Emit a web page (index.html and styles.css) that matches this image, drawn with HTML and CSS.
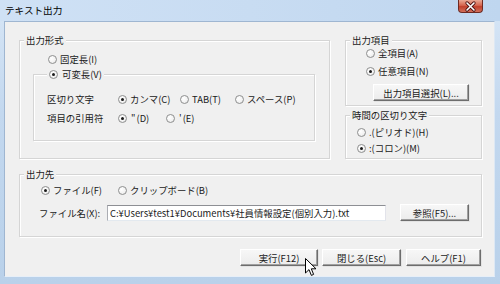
FILE: index.html
```html
<!DOCTYPE html>
<html lang="ja">
<head>
    <meta charset="UTF-8">
    <title>テキスト出力</title>
    <link rel="stylesheet" href="styles.css">
</head>
<body>
    <div class="window">
        <div class="titlebar">
            <span class="title">テキスト出力</span>
            <div class="close">
                <svg width="25" height="13" viewBox="0 0 25 13">
                    <path d="M9 3 L16 10 M16 3 L9 10" stroke="#4a1010" stroke-width="3.2" stroke-linecap="round"/>
                    <path d="M9 3 L16 10 M16 3 L9 10" stroke="#fff" stroke-width="1.6" stroke-linecap="round"/>
                </svg>
            </div>
        </div>

        <div class="client">
            <div class="top">
                <!-- 出力形式 -->
                <div class="group g-format">
                    <span class="legend">出力形式</span>
                    <div class="opt fixed"><span class="radio"></span>固定長(I)</div>
                    <div class="group g-variable">
                        <span class="legend"><span class="radio on"></span>可変長(V)</span>
                        <div class="field-row row-sep">
                            <span class="field-label">区切り文字</span>
                            <span class="opt"><span class="radio on"></span>カンマ(C)</span>
                            <span class="opt"><span class="radio"></span>TAB(T)</span>
                            <span class="opt"><span class="radio"></span>スペース(P)</span>
                        </div>
                        <div class="field-row row-quote">
                            <span class="field-label">項目の引用符</span>
                            <span class="opt"><span class="radio on"></span><span class="quote">"</span>(D)</span>
                            <span class="opt"><span class="radio"></span><span class="quote">'</span>(E)</span>
                        </div>
                    </div>
                </div>

                <div class="side">
                    <!-- 出力項目 -->
                    <div class="group g-items">
                        <span class="legend">出力項目</span>
                        <div class="opt"><span class="radio"></span>全項目(A)</div>
                        <div class="opt"><span class="radio on"></span>任意項目(N)</div>
                        <button class="btn btn-select">出力項目選択(L)...</button>
                    </div>
                    <!-- 時間の区切り文字 -->
                    <div class="group g-time">
                        <span class="legend">時間の区切り文字</span>
                        <div class="opt"><span class="radio"></span>.(ピリオド)(H)</div>
                        <div class="opt"><span class="radio on"></span>:(コロン)(M)</div>
                    </div>
                </div>
            </div>

            <!-- 出力先 -->
            <div class="group g-dest">
                <span class="legend">出力先</span>
                <div class="dest-kind">
                    <span class="opt"><span class="radio on"></span>ファイル(F)</span>
                    <span class="opt"><span class="radio"></span>クリップボード(B)</span>
                </div>
                <div class="dest-file">
                    <span class="file-label">ファイル名(X):</span>
                    <div class="textbox">C:¥Users¥test1¥Documents¥社員情報設定(個別入力).txt</div>
                    <button class="btn btn-browse">参照(F5)...</button>
                </div>
            </div>

            <div class="actions">
                <button class="btn btn-run">実行(F12)</button>
                <button class="btn btn-close">閉じる(Esc)</button>
                <button class="btn btn-help">ヘルプ(F1)</button>
            </div>
        </div>

        <svg class="cursor" width="12" height="19" viewBox="0 0 12 19">
            <path d="M0.5 0.5 L0.5 15 L4 11.6 L6.4 17.4 L8.6 16.4 L6.3 10.8 L11 10.8 Z" fill="#fff" stroke="#000" stroke-width="1" stroke-linejoin="round"/>
        </svg>
    </div>
</body>
</html>
```

FILE: styles.css
```css
/* General styling */
body {
    margin: 0;
    padding: 0;
    overflow: hidden;
    font-family: "Noto Sans CJK JP", "DejaVu Sans", sans-serif;
    font-size: 9.4px;
    color: #1a1a1a;
}

/* Window frame */
.window {
    position: relative;
    width: 500px;
    height: 284px;
    background: linear-gradient(180deg, #d7e6f6 0%, #c3d8ef 40%, #b9d1ea 100%);
    overflow: hidden;
}

.titlebar {
    height: 21px;
    display: flex;
    align-items: flex-start;
    justify-content: space-between;
    background: linear-gradient(90deg, #cfe1f5 0%, #c8dcf2 50%, #bfd6ef 100%);
}

.title {
    margin: 3px 0 0 5px;
    font-size: 9.6px;
    line-height: 14px;
    color: #000;
}

.close {
    width: 25px;
    height: 13px;
    margin-right: 17px;
    border: 1px solid #6e2a22;
    border-top: none;
    border-radius: 0 0 4px 4px;
    background: linear-gradient(180deg, #e9a894 0%, #d5654f 45%, #c1402c 55%, #d2705a 100%);
    box-sizing: border-box;
}

.close svg {
    display: block;
    margin-left: -1px;
}

/* Client area */
.client {
    width: 491px;
    height: 256px;
    margin-left: 4px;
    padding: 18px 14px 0 14px;
    box-sizing: border-box;
    background: #f0f0f0;
    border: 1px solid;
    border-color: #9fb6d1 #dde8f4 #e7eff8 #9fb6d1;
}

.top {
    display: flex;
    gap: 15px;
}

.side {
    display: flex;
    flex-direction: column;
    gap: 9px;
}

/* Group boxes */
.group {
    position: relative;
    box-sizing: border-box;
    border: 1px solid #d5d5d5;
    box-shadow: inset 1px 1px 0 #fff, 1px 1px 0 #fff;
}

.legend {
    position: absolute;
    top: -8px;
    left: 4px;
    padding: 0 2px;
    display: flex;
    align-items: center;
    height: 14px;
    line-height: 14px;
    background: #f0f0f0;
}

.g-format {
    width: 311px;
    height: 119px;
    padding: 11px 14px 0 13px;
}

.g-variable {
    width: 282px;
    height: 67px;
    margin-top: 8px;
    padding: 17px 0 0 13px;
}

.g-variable .legend {
    left: 13px;
}

.g-items {
    width: 137px;
    height: 66px;
    padding: 5px 0 0 20px;
    display: flex;
    flex-direction: column;
    align-items: flex-start;
    gap: 4px;
}

.g-time {
    width: 137px;
    height: 44px;
    padding: 9px 0 0 11px;
    display: flex;
    flex-direction: column;
    gap: 2px;
}

.g-dest {
    width: 463px;
    height: 63px;
    margin-top: 15px;
    padding: 8px 0 0 19px;
}

/* Radio options */
.opt {
    display: flex;
    align-items: center;
    height: 14px;
    line-height: 14px;
    white-space: nowrap;
}

.fixed {
    margin-left: 15px;
}

.radio {
    flex: none;
    width: 9px;
    height: 9px;
    margin-right: 3px;
    box-sizing: border-box;
    border: 1px solid #8e8f8f;
    border-radius: 50%;
    background: radial-gradient(circle at 35% 35%, #ffffff 0%, #f2f2f2 60%, #dcdcdc 100%);
    position: relative;
}

.radio.on::after {
    content: "";
    position: absolute;
    left: 2px;
    top: 2px;
    width: 3px;
    height: 3px;
    border-radius: 50%;
    background: #1a1a1a;
}

.legend .radio {
    margin-right: 4px;
}

.quote {
    padding: 0 1px;
}

.field-row {
    display: grid;
    height: 14px;
    align-items: center;
}

.row-sep {
    grid-template-columns: 71px 62px 55px auto;
}

.row-quote {
    grid-template-columns: 71px 48px auto;
    margin-top: 5px;
}

.field-label {
    line-height: 14px;
}

/* 出力先 */
.dest-kind {
    display: grid;
    grid-template-columns: 77px auto;
    margin-left: 2px;
}

.dest-file {
    display: flex;
    align-items: center;
    margin-top: 7px;
}

.file-label {
    width: 68px;
    flex: none;
}

.textbox {
    width: 279px;
    height: 16px;
    box-sizing: border-box;
    padding: 0 2px;
    line-height: 14px;
    background: #fff;
    border: 1px solid;
    border-color: #8d8f94 #e2e3ea #e3e9ef #abadb3;
    white-space: nowrap;
    overflow: hidden;
}

/* Buttons */
.btn {
    height: 17px;
    padding: 0;
    font-family: inherit;
    font-size: 9.4px;
    line-height: 14px;
    color: #1a1a1a;
    background: linear-gradient(180deg, #f7f7f7 0%, #ececec 100%);
    border: 1px solid;
    border-color: #fff #6d6d6d #6d6d6d #fff;
    box-shadow: inset -1px -1px 0 #a0a0a0, 1px 1px 0 #e3e3e3;
    box-sizing: border-box;
}

.btn-select {
    width: 96px;
    margin: 2px 0 0 7px;
}

.btn-browse {
    width: 69px;
    margin-left: 14px;
}

.actions {
    display: flex;
    justify-content: flex-end;
    gap: 4px;
    margin-top: 12px;
    margin-right: -1px;
}

.btn-run {
    width: 78px;
}

.btn-close {
    width: 79px;
}

.btn-help {
    width: 75px;
    margin-left: 1px;
}

/* Mouse pointer over the run button */
.cursor {
    position: absolute;
    left: 305px;
    top: 258px;
}
```
